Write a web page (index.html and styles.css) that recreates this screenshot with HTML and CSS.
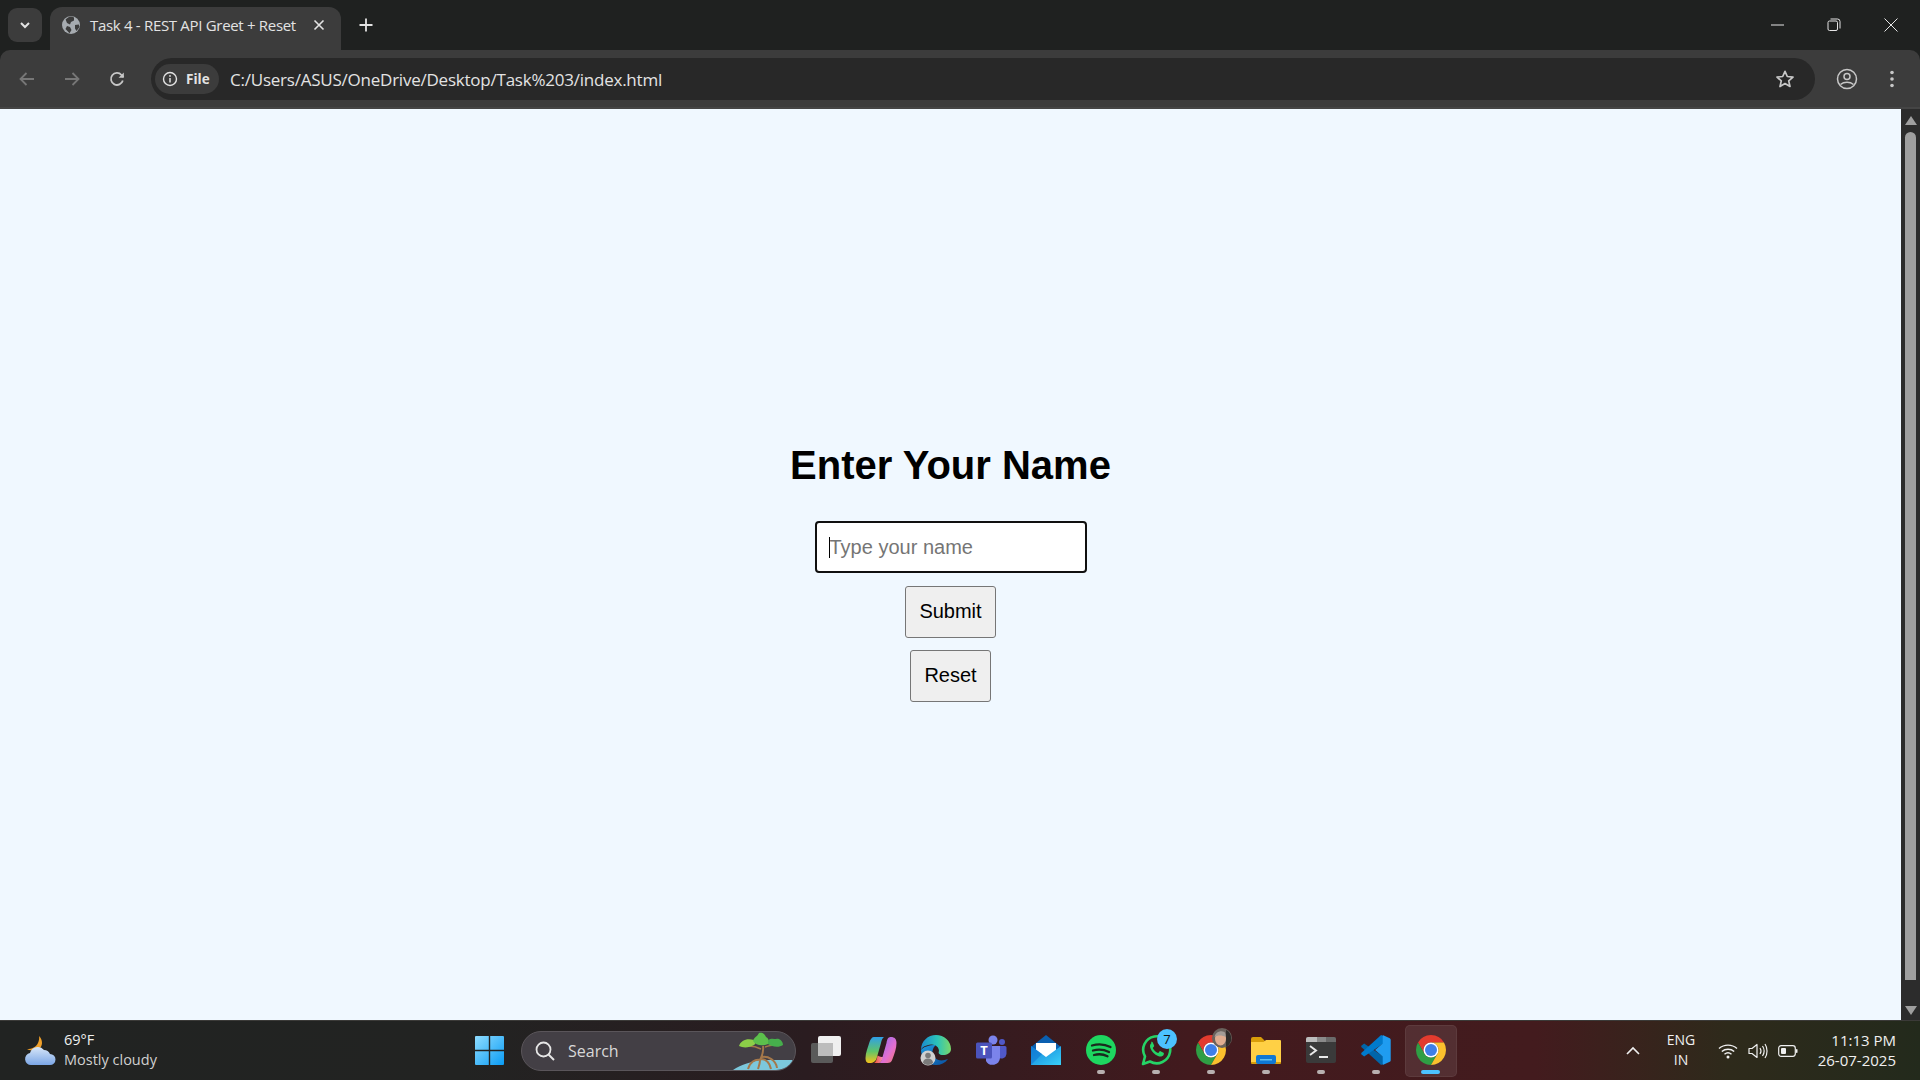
FILE: index.html
```html
<!DOCTYPE html>
<html lang="en">
<head>
  <meta charset="UTF-8" />
  <title>Task 4 - REST API Greet + Reset</title>
  <link rel="stylesheet" href="styles.css">
</head>
<body>
  <svg class="defs" width="0" height="0">
    <symbol id="chrome" viewBox="0 0 48 48">
      <path fill="#e33b2e" d="M24 4A20 20 0 0 1 41.32 14H24A10 10 0 0 0 15.34 29L6.68 14A20 20 0 0 1 24 4Z"/>
      <path fill="#2f9e44" d="M6.68 14L15.34 29A10 10 0 0 0 32.66 29L24 44A20 20 0 0 1 6.68 14Z"/>
      <path fill="#fbc02d" d="M41.32 14H24A10 10 0 0 1 32.66 29L24 44A20 20 0 0 0 41.32 14Z"/>
      <circle cx="24" cy="24" r="10" fill="#fff"/>
      <circle cx="24" cy="24" r="8" fill="#3f7fe8"/>
    </symbol>
  </svg>

  <div class="tabstrip">
    <button class="tab-search" type="button">
      <svg width="12" height="12" viewBox="0 0 12 12"><path d="M2 4l4 4 4-4" fill="none" stroke="#e3e3e3" stroke-width="2"/></svg>
    </button>
    <div class="tab">
      <svg class="favicon" width="20" height="20" viewBox="0 0 20 20">
        <circle cx="10" cy="10" r="9" fill="#a6abb0"/>
        <path fill="#3c3c3c" d="M10 1.500c-2 .3-4 1.400-5.400 3L6 8l3 1.500 1-2.500 3-1.500V2.500A9 9 0 0 0 10 1.500zM9 12l-3-1-1.500 3 4 4.300 2-3.300zM14 10l3.800-.5.700 2.500-3 4-1.500-2.500z"/>
      </svg>
      <span class="tab-title">Task 4 - REST API Greet + Reset</span>
      <svg class="tab-close" width="12" height="12" viewBox="0 0 12 12"><path d="M1.500 1.500l9 9m0-9l-9 9" stroke="#e3e3e3" stroke-width="1.600"/></svg>
    </div>
    <svg class="new-tab" width="16" height="16" viewBox="0 0 16 16"><path d="M8 1.500v13M1.500 8h13" stroke="#e3e3e3" stroke-width="1.800"/></svg>
    <div class="win-btns">
      <svg width="14" height="14" viewBox="0 0 14 14"><path d="M1 7h13" stroke="#e6e6e6" stroke-width="1"/></svg>
      <svg width="14" height="14" viewBox="0 0 14 14"><rect x="1" y="3" width="9.500" height="9.500" rx="1.500" fill="none" stroke="#e6e6e6"/><path d="M3.500 1h7a2.500 2.500 0 0 1 2.500 2.500v7" fill="none" stroke="#e6e6e6"/></svg>
      <svg width="14" height="14" viewBox="0 0 14 14"><path d="M.5.500l13 13m0-13l-13 13" stroke="#e6e6e6" stroke-width="1"/></svg>
    </div>
  </div>

  <div class="toolbar">
    <div class="nav-btns">
      <svg width="18" height="18" viewBox="0 0 18 18"><path d="M16 9H3m5.500-6L2.500 9l6 6" fill="none" stroke="#777" stroke-width="1.800"/></svg>
      <svg width="18" height="18" viewBox="0 0 18 18"><path d="M2 9h13M9.500 3l6 6-6 6" fill="none" stroke="#777" stroke-width="1.800"/></svg>
      <svg width="18" height="18" viewBox="0 0 18 18"><path d="M14.800 10.500A6 6 0 1 1 13.500 5L15.500 7" fill="none" stroke="#c7c7c7" stroke-width="1.800"/><path d="M15.800 2.500v5.200h-5.200z" fill="#c7c7c7"/></svg>
    </div>
    <div class="omnibox">
      <div class="chip">
        <svg width="16" height="16" viewBox="0 0 16 16"><circle cx="8" cy="8" r="6.500" fill="none" stroke="#e3e3e3" stroke-width="1.400"/><path d="M8 7v4.500" stroke="#e3e3e3" stroke-width="1.500"/><circle cx="8" cy="4.900" r=".9" fill="#e3e3e3"/></svg>
        <span>File</span>
      </div>
      <span class="url">C:/Users/ASUS/OneDrive/Desktop/Task%203/index.html</span>
      <svg class="star" width="20" height="20" viewBox="0 0 20 20"><path d="M10 2.300l2.300 5.200 5.700.6-4.300 3.800 1.300 5.600L10 14.600l-5 2.900 1.300-5.600L2 8.100l5.700-.6z" fill="none" stroke="#c7c7c7" stroke-width="1.700" stroke-linejoin="round"/></svg>
    </div>
    <svg class="profile" width="22" height="22" viewBox="0 0 22 22"><circle cx="11" cy="11" r="9.500" fill="none" stroke="#c7c7c7" stroke-width="1.500"/><circle cx="11" cy="8.500" r="3" fill="none" stroke="#c7c7c7" stroke-width="1.500"/><path d="M4.500 16.500c3.500-3 9.500-3 13 0" fill="none" stroke="#c7c7c7" stroke-width="1.500"/></svg>
    <svg class="menu" width="6" height="18" viewBox="0 0 6 18"><circle cx="3" cy="2.500" r="1.800" fill="#c7c7c7"/><circle cx="3" cy="9" r="1.800" fill="#c7c7c7"/><circle cx="3" cy="15.500" r="1.800" fill="#c7c7c7"/></svg>
  </div>

  <div class="viewport">
    <div class="page">
      <h1>Enter Your Name</h1>
      <div class="field">
        <input type="text" placeholder="Type your name" />
        <span class="caret"></span>
      </div>
      <button type="button" class="btn">Submit</button>
      <button type="button" class="btn">Reset</button>
    </div>
    <div class="scrollbar">
      <span class="arrow-up"></span>
      <span class="thumb"></span>
      <span class="arrow-down"></span>
    </div>
  </div>

  <div class="taskbar">
    <div class="weather">
      <svg width="32" height="32" viewBox="0 0 32 32">
        <defs><linearGradient id="cloud" x1="0" y1="0" x2="0" y2="1"><stop offset="0" stop-color="#d7e6f8"/><stop offset="1" stop-color="#7ba6e6"/></linearGradient></defs>
        <path fill="#f0a02a" d="M15 1c4 4 4 10 0 13-3 2-8 2-12 0 5 0 9-2 11-6 1-2 1.500-5 1-7z"/>
        <path fill="url(#cloud)" d="M7 30a6 6 0 0 1-1-11.900A8 8 0 0 1 20 15a6.500 6.500 0 0 1 6 4 5.500 5.500 0 0 1 0 11z"/>
      </svg>
      <div class="weather-text">
        <div class="temp">69°F</div>
        <div class="cond">Mostly cloudy</div>
      </div>
    </div>

    <div class="start">
      <svg width="29" height="29" viewBox="0 0 29 29">
        <defs><linearGradient id="winblue" x1="0" y1="0" x2="1" y2="1"><stop offset="0" stop-color="#8fdcff"/><stop offset="1" stop-color="#0a9cf5"/></linearGradient></defs>
        <path fill="url(#winblue)" d="M1 0h12.800v13.800H0V1a1 1 0 0 1 1-1zM15.200 0H28a1 1 0 0 1 1 1v12.800H15.200zM0 15.200h13.800V29H1a1 1 0 0 1-1-1zM15.200 15.200H29V28a1 1 0 0 1-1 1H15.200z"/>
      </svg>
    </div>

    <div class="search">
      <svg width="22" height="22" viewBox="0 0 22 22"><circle cx="9.500" cy="9.500" r="7" fill="none" stroke="#e6e6e6" stroke-width="1.800"/><path d="M14.500 14.500l5.500 5.500" stroke="#e6e6e6" stroke-width="2"/></svg>
      <span>Search</span>
      <svg class="tree" width="60" height="38" viewBox="0 0 60 38">
        <path fill="#7cc8dc" d="M0 38C8 32 20 30 26 28h34l-5 10z"/>
        <path d="M30 14c1 6-1 10-3 14M27 28c-5-1-10 2-12 9M27 28c0 3-1 6-2 9M28 27c5 0 9 4 10 10M29 25c6-1 14 3 15 11" fill="none" stroke="#a5784a" stroke-width="2"/>
        <path d="M28 17c-4-2-8-3-12-3M32 15c3-1 6-2 9-2" fill="none" stroke="#a5784a" stroke-width="1.600"/>
        <path fill="#8ccf48" d="M6 14c2-6 8-8 15-6 2 1 2 4 0 5-5 3-11 3-15 1z"/>
        <path fill="#5cc04c" d="M20 9c1-4 4-4 6-8 3-1 6 1 7 4 3 1 3 5 2 7-5 2-12 2-15-3z"/>
        <path fill="#46ae4c" d="M35 8c3-2 6-1 8-1 3-1 7 2 7 6-4 3-11 2-15-1z"/>
      </svg>
    </div>

    <div class="apps">
      <div class="app">
        <svg width="32" height="32" viewBox="0 0 32 32">
          <rect x="1" y="9" width="22" height="20" rx="2" fill="#5a5a5a"/>
          <rect x="8" y="2" width="23" height="20" rx="2" fill="#f0f0f0"/>
          <rect x="8" y="9" width="15" height="13" fill="#bdbdbd"/>
        </svg>
      </div>
      <div class="app">
        <svg width="32" height="32" viewBox="0 0 32 32">
          <defs>
            <linearGradient id="copa" x1="0" y1="0" x2="0" y2="1"><stop offset="0" stop-color="#2f9fe8"/><stop offset=".55" stop-color="#5fc46a"/><stop offset="1" stop-color="#f5c21a"/></linearGradient>
            <linearGradient id="copb" x1="0" y1="0" x2="1" y2="1"><stop offset="0" stop-color="#8a6cf0"/><stop offset=".6" stop-color="#e26fd0"/><stop offset="1" stop-color="#f6786a"/></linearGradient>
            <linearGradient id="copd" x1="0" y1="0" x2="1" y2="0"><stop offset="0" stop-color="#f0572a"/><stop offset="1" stop-color="#f08ac0"/></linearGradient>
          </defs>
          <path fill="url(#copa)" d="M9 3h10c-1.500 1-2.500 3-3 6l-4 14c-.8 4-3.500 6-7.500 6-3 0-4-2-4-5 0-5 2.500-11 4-16C5.500 5 7 3 9 3z"/>
          <path fill="url(#copb)" d="M26 3c3.500 0 5.500 2 5.500 6 0 5-2 11-4 16-1 3-2.500 4-5 4h-8c1.500-1 2.500-3 3-6l4-14c.7-4 1.500-6 4.500-6z"/>
          <path fill="url(#copd)" d="M12.500 21.500c2 1 4 1.500 5.500 1.500-.5 3-2 5-3.500 6H9c2-1 3-4 3.500-7.500z"/>
        </svg>
      </div>
      <div class="app">
        <svg width="32" height="32" viewBox="0 0 32 32">
          <defs>
            <linearGradient id="edgea" x1="0" y1="0" x2="1" y2="0"><stop offset="0" stop-color="#1a8ad0"/><stop offset=".55" stop-color="#2cc4b8"/><stop offset="1" stop-color="#7ad86a"/></linearGradient>
            <linearGradient id="edgeb" x1="0" y1="0" x2="1" y2="1"><stop offset="0" stop-color="#1c9ae0"/><stop offset="1" stop-color="#0b4f9e"/></linearGradient>
          </defs>
          <path fill="url(#edgea)" d="M1 16C1 7 8 1 16 1c8 0 15 6 15 14 0 4-4 6-8 6-4 0-5-2-4-4 0-4-4-7-8-6.500-5 .5-9 2.500-10 5.500z"/>
          <path fill="url(#edgeb)" d="M1 16c0 8 7 15 15 15 5 0 9-2 12-6-5 2-10 2-13-1-4-4-3-10 1-13-7 0-13 2-15 5z"/>
          <circle cx="8" cy="24" r="7.500" fill="#d0d0d0"/>
          <circle cx="8" cy="21.500" r="2.800" fill="#7a7a7a"/>
          <path fill="#7a7a7a" d="M3 29c0-3 2-4.500 5-4.500s5 1.500 5 4.500a7 7 0 0 1-10 0z"/>
        </svg>
      </div>
      <div class="app">
        <svg width="32" height="32" viewBox="0 0 32 32">
          <circle cx="18" cy="6" r="4.500" fill="#7b83eb"/>
          <circle cx="27" cy="8" r="3" fill="#5059c9"/>
          <path fill="#5059c9" d="M23 12h7a1.500 1.500 0 0 1 1.500 1.500V20a5 5 0 0 1-8.500 3z"/>
          <path fill="#7b83eb" d="M11 12h14v12a7.500 7.500 0 0 1-14 3z"/>
          <rect x="1" y="8.500" width="16" height="16" rx="1.500" fill="#4b53bc"/>
          <text class="teams-t" x="9" y="21">T</text>
        </svg>
      </div>
      <div class="app">
        <svg width="32" height="32" viewBox="0 0 32 32">
          <defs><linearGradient id="maila" x1="0" y1="0" x2="1" y2="1"><stop offset="0" stop-color="#1080d8"/><stop offset="1" stop-color="#3ad0f8"/></linearGradient></defs>
          <path fill="#0a5fb0" d="M1 13L16 1l15 12v6H1z"/>
          <path fill="#fff" d="M6 9h20v14H6z"/>
          <path fill="url(#maila)" d="M1 12l15 11 15-11v19H1z"/>
          <path fill="#0f78d4" d="M1 31V12l11 8z" opacity=".6"/>
        </svg>
      </div>
      <div class="app has-dot">
        <svg width="32" height="32" viewBox="0 0 32 32">
          <circle cx="16" cy="16" r="15" fill="#1ed760"/>
          <path d="M7 11.500c6-1.800 13-1.300 18.500 1.500M8 16.500c5.500-1.500 11-1 16 1.500M9 21c4.500-1.200 9.500-.8 13.500 1.300" fill="none" stroke="#1a2a1e" stroke-width="2.300" stroke-linecap="round"/>
        </svg>
      </div>
      <div class="app has-dot">
        <svg width="32" height="32" viewBox="0 0 32 32">
          <path d="M3 30l2-7.500A13.500 13.500 0 1 1 10 27.500z" fill="none" stroke="#25d366" stroke-width="2.600" stroke-linejoin="round"/>
          <path fill="#25d366" d="M11.500 9c-1.500 1-2 3-1 5.500 1.500 3.500 4 6 7.500 7.500 2.500 1 4.500.5 5.500-1 .5-1 .5-2 0-2.300l-3-1.500c-.5-.2-.8 0-1 .3l-1 1.200c-.3.300-.6.300-1 .1-2-1-3.500-2.500-4.500-4.300-.2-.4-.2-.7.100-1l.9-1.100c.2-.3.2-.6.100-.9l-1.300-3c-.2-.6-1-.8-1.800-.5z"/>
        </svg>
        <span class="badge">7</span>
      </div>
      <div class="app has-dot">
        <svg class="chrome-icon" width="36" height="36"><use href="#chrome"/></svg>
        <span class="avatar">
          <svg width="20" height="20" viewBox="0 0 20 20">
            <circle cx="10" cy="10" r="10" fill="#6a625c"/>
            <path fill="#2f2b29" d="M14 2c4 2 6 6 5 11-1 3-3 5-5 6z"/>
            <ellipse cx="8.500" cy="11" rx="5.500" ry="6.500" fill="#e0ad90"/>
            <path fill="#a39c96" d="M2.500 9c1-5 6-7 10-5 1 2 1.500 3 1 5-3-2-8-2-11 0z"/>
          </svg>
        </span>
      </div>
      <div class="app has-dot">
        <svg width="32" height="32" viewBox="0 0 32 32">
          <path fill="#d99e0a" d="M1 5a2 2 0 0 1 2-2h8l4 4h14a2 2 0 0 1 2 2v4H1z"/>
          <path fill="#ffd045" d="M1 8h12.500L16 6h14a1 1 0 0 1 1 1v21a1 1 0 0 1-1 1H2a1 1 0 0 1-1-1z"/>
          <path fill="#d99e0a" d="M1 28h30v1a1 1 0 0 1-1 1H2a1 1 0 0 1-1-1z"/>
          <rect x="6" y="21" width="20" height="9" rx="2" fill="#0f78d4"/>
          <rect x="10" y="25" width="12" height="1.500" fill="#60c0f0"/>
        </svg>
      </div>
      <div class="app has-dot">
        <svg width="32" height="32" viewBox="0 0 32 32">
          <rect x="1" y="3" width="30" height="26" rx="2" fill="#3a3a3a"/>
          <path fill="#bdbdbd" d="M3 3h9v5H1V5a2 2 0 0 1 2-2z"/>
          <path fill="#8a8a8a" d="M12 3h9v5h-9z"/>
          <path fill="#6a6a6a" d="M21 3h8a2 2 0 0 1 2 2v3H21z"/>
          <path d="M5 12l6 4.500L5 21" fill="none" stroke="#e8e8e8" stroke-width="2"/>
          <path d="M14 23h9" stroke="#e8e8e8" stroke-width="2"/>
        </svg>
      </div>
      <div class="app has-dot">
        <svg width="32" height="32" viewBox="0 0 100 100">
          <path fill="#0065a9" d="M4 37l9-7 62 42v20l-9 5L4 41z"/>
          <path fill="#007acc" d="M4 63l9 7 62-42V8l-9-5L4 59z"/>
          <path fill="#1f9cf0" d="M71 3l22 10c2 1 3 3 3 5v64c0 2-1 4-3 5L71 97V70L47 50l24-20z"/>
        </svg>
      </div>
      <div class="app active">
        <svg class="chrome-icon" width="36" height="36"><use href="#chrome"/></svg>
      </div>
    </div>

    <div class="tray">
      <svg class="tray-up" width="14" height="14" viewBox="0 0 14 14"><path d="M1 10l6-6 6 6" fill="none" stroke="#f0f0f0" stroke-width="1.600"/></svg>
      <div class="lang">ENG<br>IN</div>
      <svg class="tray-wifi" width="20" height="16" viewBox="0 0 20 16"><path d="M1 5.500c5-4.500 13-4.500 18 0M3.800 8.500c3.500-3 9-3 12.400 0M6.500 11.300c2-1.700 5-1.700 7 0" fill="none" stroke="#f0f0f0" stroke-width="1.400"/><circle cx="10" cy="14" r="1.500" fill="#f0f0f0"/></svg>
      <svg class="tray-vol" width="20" height="18" viewBox="0 0 20 18"><path d="M1 6.500h3L9 2.500v13l-5-4H1z" fill="none" stroke="#f0f0f0" stroke-width="1.200" stroke-linejoin="round"/><path d="M12 6c1.200 1.800 1.200 4.200 0 6M14.500 4c2 3 2 7 0 10M17 2c2.700 4 2.700 10 0 14" fill="none" stroke="#f0f0f0" stroke-width="1.200"/></svg>
      <svg class="tray-bat" width="20" height="14" viewBox="0 0 20 14"><rect x=".7" y="1.700" width="16.600" height="10.600" rx="2.500" fill="none" stroke="#f0f0f0" stroke-width="1.200"/><rect x="3" y="4" width="5" height="6" rx="1" fill="#f0f0f0"/><rect x="18" y="5" width="1.500" height="4" rx=".7" fill="#f0f0f0"/></svg>
      <div class="clock">
        <div>11:13 PM</div>
        <div>26-07-2025</div>
      </div>
    </div>
  </div>
</body>
</html>
```

FILE: styles.css
```css
* {
  box-sizing: border-box;
}

html, body {
  margin: 0;
  height: 1080px;
  overflow: hidden;
}

body {
  display: flex;
  flex-direction: column;
  font-family: "Liberation Sans", Arial, sans-serif;
  background: #1f2120;
}

svg {
  display: block;
  flex: none;
}

.defs {
  position: absolute;
}

/* browser chrome */
.tabstrip {
  height: 50px;
  display: flex;
  align-items: flex-end;
  background: #1f2120;
  color: #e3e3e3;
  font-family: "Open Sans", sans-serif;
}

.tab-search {
  width: 34px;
  height: 34px;
  margin: 0 8px 8px 8px;
  padding: 0;
  border: 0;
  border-radius: 9px;
  background: #3c3c3c;
  display: flex;
  align-items: center;
  justify-content: center;
}

.tab {
  width: 291px;
  height: 43px;
  display: flex;
  align-items: center;
  padding: 0 0 8px 11px;
  background: #3c3c3c;
  border-radius: 12px 12px 0 0;
}

.tab-title {
  margin-left: 9px;
  font-size: 15px;
  letter-spacing: -0.31px;
  white-space: nowrap;
}

.tab-close {
  margin-left: 17px;
}

.new-tab {
  margin: 0 0 17px 17px;
}

.win-btns {
  margin-left: auto;
  display: flex;
  align-items: center;
  gap: 43px;
  height: 50px;
  padding-right: 22px;
}

.toolbar {
  height: 59px;
  display: flex;
  align-items: center;
  padding: 1px 19px 0 18px;
  background: #3c3c3c;
  border-bottom: 2px solid #454545;
  border-radius: 10px 10px 0 0;
}

.nav-btns {
  display: flex;
  gap: 27px;
  width: 133px;
}

.omnibox {
  width: 1664px;
  height: 42px;
  display: flex;
  align-items: center;
  padding: 0 20px 0 4px;
  background: #282828;
  border-radius: 21px;
}

.chip {
  width: 64px;
  height: 30px;
  display: flex;
  align-items: center;
  gap: 8px;
  padding-left: 7px;
  border-radius: 15px;
  background: #3c3c3c;
  color: #e3e3e3;
  font: bold 13.5px "Open Sans", sans-serif;
}

.url {
  margin-left: 11px;
  color: #e3e3e3;
  font: 17px "Open Sans", sans-serif;
  letter-spacing: -0.23px;
  white-space: nowrap;
}

.star {
  margin-left: auto;
}

.profile {
  margin-left: 21px;
}

.menu {
  margin-left: 31px;
}

/* page */
.viewport {
  height: 911px;
  display: flex;
  background: #f0f8ff;
}

.page {
  flex: 1;
  display: flex;
  flex-direction: column;
  align-items: center;
  padding-top: 334px;
}

h1 {
  margin: 0 0 33px 0;
  font-size: 40px;
  color: #000;
}

.field {
  position: relative;
}

input {
  display: block;
  width: 272px;
  height: 52px;
  padding: 0 13px;
  border: 2.5px solid #101010;
  border-radius: 4px;
  outline: none;
  background: #fff;
  font: 20px "Liberation Sans", Arial, sans-serif;
}

input::placeholder {
  color: #757575;
}

.caret {
  position: absolute;
  left: 14px;
  top: 16px;
  width: 1px;
  height: 21px;
  background: #000;
}

.btn {
  height: 52px;
  margin-top: 13px;
  padding: 0 13px 1px 13px;
  border: 1px solid #767676;
  border-radius: 3px;
  background: #efefef;
  color: #000;
  font: 20px "Liberation Sans", Arial, sans-serif;
}

.btn + .btn {
  margin-top: 12px;
}

.scrollbar {
  width: 19px;
  display: flex;
  flex-direction: column;
  align-items: center;
  padding: 7px 0 5px 0;
  background: #2c2c2c;
}

.arrow-up, .arrow-down {
  width: 0;
  height: 0;
  border-left: 6px solid transparent;
  border-right: 6px solid transparent;
}

.arrow-up {
  border-bottom: 9px solid #9f9f9f;
}

.arrow-down {
  margin-top: auto;
  border-top: 9px solid #9f9f9f;
}

.thumb {
  width: 11px;
  height: 848px;
  margin-top: 7px;
  border-radius: 6px 6px 0 0;
  background: #9f9f9f;
}

/* windows taskbar */
.taskbar {
  height: 60px;
  display: flex;
  align-items: center;
  border-top: 1px solid #3b3a38;
  background: linear-gradient(90deg, #212322 0, #222322 24%, #2a1c20 42%, #421a1e 62%, #431b1e 80%, #2e2a1b 90%, #232a1c 100%);
  color: #f0f0f0;
  font-family: "Open Sans", sans-serif;
}

.weather {
  width: 462px;
  display: flex;
  align-items: center;
  gap: 8px;
  padding-left: 24px;
  font-size: 14.5px;
  line-height: 20px;
}

.weather-text {
  padding-bottom: 2px;
}

.cond {
  color: #d0d0d0;
}

.start {
  width: 55px;
  display: flex;
  justify-content: center;
}

.search {
  width: 275px;
  height: 40px;
  margin-left: 4px;
  display: flex;
  align-items: center;
  gap: 12px;
  padding-left: 12px;
  border: 1px solid #5a555a;
  border-radius: 20px;
  background: #433f45;
  color: #d8d8d8;
  font-size: 16px;
  overflow: hidden;
}

.tree {
  margin-left: auto;
  margin-right: 2px;
}

.apps {
  display: flex;
  margin-left: 2px;
}

.app {
  position: relative;
  width: 55px;
  height: 59px;
  padding-bottom: 2px;
  display: flex;
  align-items: center;
  justify-content: center;
}

.has-dot::after {
  content: "";
  position: absolute;
  left: 24px;
  bottom: 6px;
  width: 8px;
  height: 4px;
  border-radius: 2px;
  background: #b8b0b0;
}

.active::before {
  content: "";
  position: absolute;
  left: 2px;
  top: 4px;
  width: 50px;
  height: 50px;
  border: 1px solid rgba(255, 255, 255, 0.06);
  border-radius: 5px;
  background: rgba(255, 255, 255, 0.09);
}

.active svg {
  position: relative;
}

.active::after {
  content: "";
  position: absolute;
  left: 18px;
  bottom: 6px;
  width: 19px;
  height: 4px;
  border-radius: 2px;
  background: #4cc2ff;
}

.badge {
  position: absolute;
  left: 29px;
  top: 8px;
  width: 20px;
  height: 20px;
  border-radius: 50%;
  background: #4cc2ff;
  color: #111;
  font-size: 13px;
  line-height: 20px;
  text-align: center;
}

.avatar {
  position: absolute;
  left: 29px;
  top: 7px;
}

.teams-t {
  fill: #fff;
  font: bold 13px "Open Sans", sans-serif;
  text-anchor: middle;
}

.tray {
  flex: 1;
  height: 59px;
  display: flex;
  align-items: center;
  justify-content: flex-end;
  padding-right: 24px;
  font-size: 15px;
}

.tray-up {
  margin-right: 21px;
}

.lang {
  width: 40px;
  margin-right: 17px;
  padding-bottom: 1px;
  font-size: 14px;
  line-height: 20px;
  text-align: center;
}

.tray-wifi {
  margin-right: 10px;
}

.tray-vol {
  margin-right: 10px;
}

.clock {
  width: 98px;
  padding-bottom: 2px;
  line-height: 20px;
  text-align: right;
}
```
